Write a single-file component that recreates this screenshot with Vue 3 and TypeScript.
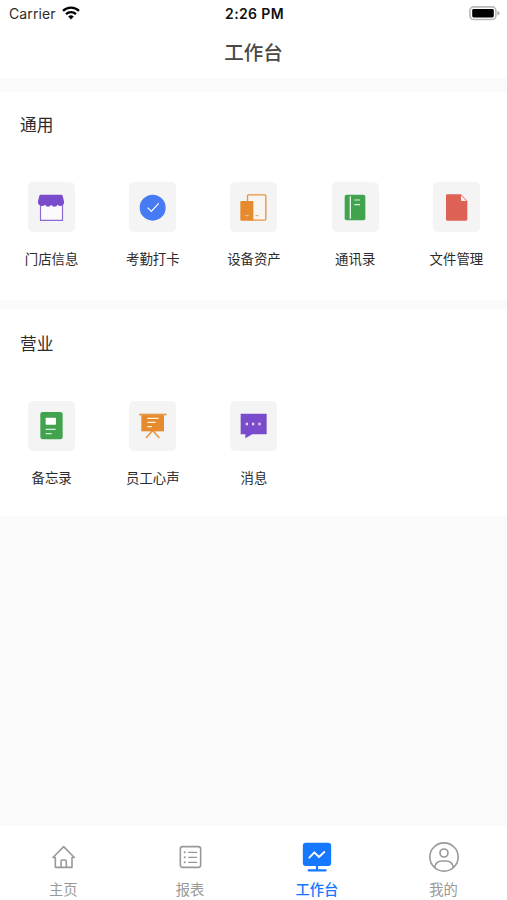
<script setup lang="ts">
interface Entry {
  icon: string
  label: string
}
interface Section {
  title: string
  entries: Entry[]
}

const sections: Section[] = [
  {
    title: '通用',
    entries: [
      { icon: 'store', label: '门店信息' },
      { icon: 'check', label: '考勤打卡' },
      { icon: 'device', label: '设备资产' },
      { icon: 'contacts', label: '通讯录' },
      { icon: 'file', label: '文件管理' },
    ],
  },
  {
    title: '营业',
    entries: [
      { icon: 'memo', label: '备忘录' },
      { icon: 'board', label: '员工心声' },
      { icon: 'message', label: '消息' },
    ],
  },
]

const tabs: Entry[] = [
  { icon: 'home', label: '主页' },
  { icon: 'report', label: '报表' },
  { icon: 'work', label: '工作台' },
  { icon: 'me', label: '我的' },
]
const active = 'work'
</script>

<template>
  <div class="screen">
    <header class="status">
      <div class="carrier">
        <span>Carrier</span>
        <svg class="wifi" viewBox="0 0 18 14" fill="none" stroke="#000" stroke-width="2.3">
          <path d="M1 4.9a11.4 11.4 0 0 1 16 0" />
          <path d="M4 8.1a7.1 7.1 0 0 1 10 0" />
          <path d="M9 13.6 6.2 10.6a4 4 0 0 1 5.6 0Z" fill="#000" stroke="none" />
        </svg>
      </div>
      <div class="clock">2:26 PM</div>
      <svg class="battery" viewBox="0 0 31 15">
        <rect x="0.9" y="0.9" width="26" height="12.6" rx="3.8" fill="#fff" stroke="#b9b9b9" stroke-width="1.6" />
        <rect x="3.2" y="3.1" width="21.6" height="8.4" rx="1.4" fill="#000" />
        <path d="M28.4 4.8q2.2.8 2.2 2.4t-2.2 2.4Z" fill="#b0b0b0" />
      </svg>
    </header>
    <h1 class="title">工作台</h1>

    <main class="content">
      <section v-for="s in sections" :key="s.title" class="section">
        <h2>{{ s.title }}</h2>
        <div class="grid">
          <div v-for="e in s.entries" :key="e.icon" class="entry">
            <div class="tile">
              <svg viewBox="0 0 141 150">
                <g v-if="e.icon === 'store'">
                  <path d="M37.500 66V115H103.500V66" fill="#fbfafd" stroke="#8b68d2" stroke-width="3.500" />
                  <path d="M38 38H100Q103 38 104 41L108 58V64Q106 72 98 72Q92 72 89 68Q85 74 79 74Q73 74 70 68Q66 74 60 74Q54 74 51 68Q47 73 41 72Q32 71 30 64V58L34 41Q35 38 38 38Z" fill="#7a4bcb" />
                </g>
                <g v-else-if="e.icon === 'check'">
                  <circle cx="71" cy="77" r="39" fill="#467bf4" />
                  <path d="M56 77L67 88L89 64" fill="none" stroke="#fff" stroke-width="3.600" />
                </g>
                <g v-else-if="e.icon === 'device'">
                  <path d="M52.500 60V42Q52.500 38.500 56 38.500H104Q107.500 38.500 107.500 42V111Q107.500 114.500 104 114.500H66" fill="#f8f5f0" stroke="#e89340" stroke-width="4" />
                  <rect x="31" y="57" width="39" height="59" rx="3" fill="#e68a2e" />
                  <path d="M46 101H56" stroke="#f5d4b0" stroke-width="3" />
                  <path d="M77 101H85" stroke="#d9a36b" stroke-width="3" />
                </g>
                <g v-else-if="e.icon === 'contacts'">
                  <rect x="38" y="38" width="62" height="77" rx="6" fill="#42a34f" />
                  <path d="M55 43V110" stroke="#e3f3e5" stroke-width="4" />
                  <path d="M67 54H84M67 68H84" stroke="#d8efdb" stroke-width="3.500" />
                </g>
                <g v-else-if="e.icon === 'file'">
                  <path d="M43 37H84L103 57V112Q103 116 99 116H43Q39 116 39 112V41Q39 37 43 37Z" fill="#dd6155" />
                  <path d="M84 40V54Q84 57 87 57H100Z" fill="#fdf1ef" />
                </g>
                <g v-else-if="e.icon === 'memo'">
                  <rect x="37" y="33" width="67" height="82" rx="7" fill="#42a34f" />
                  <rect x="53" y="50" width="31" height="21" rx="2" fill="#fff" />
                  <path d="M53 85H83M53 98H71" stroke="#d8f0db" stroke-width="4" />
                </g>
                <g v-else-if="e.icon === 'board'">
                  <path d="M71 88L51 111M71 88L91 111" stroke="#e69a48" stroke-width="5" />
                  <rect x="37" y="39" width="68" height="52" fill="#e68a2e" />
                  <path d="M30 40.500H113" stroke="#e69a48" stroke-width="5" />
                  <path d="M55 52H89M55 64H80M55 77H69" stroke="#fff0df" stroke-width="4" />
                </g>
                <g v-else>
                  <path d="M32 38H110V100H67L46 112V100H32Z" fill="#7a4bcb" />
                  <path d="M47 69h7M66 69h7M85 69h7" stroke="#e2d7f6" stroke-width="7" />
                </g>
              </svg>
            </div>
            <span class="label">{{ e.label }}</span>
          </div>
        </div>
      </section>
    </main>

    <nav class="tabs">
      <div v-for="t in tabs" :key="t.icon" class="tab" :class="{ active: t.icon === active }">
        <svg viewBox="0 0 96 96" fill="none" stroke="currentColor" stroke-width="4.800" stroke-linejoin="round" stroke-linecap="round">
          <g v-if="t.icon === 'home'">
            <path d="M50 17L82 49.500H75V79H25V49.500H18Z" />
            <path d="M42 78V61Q42 57 46 57H54Q58 57 58 61V78" />
          </g>
          <g v-else-if="t.icon === 'report'">
            <rect x="19" y="17" width="61" height="62" rx="7" />
            <path d="M44 34H68M44 49H68M44 64H68" stroke-width="4" />
            <path d="M32 34h.1M32 49h.1M32 64h.1" stroke-width="6" />
          </g>
          <g v-else-if="t.icon === 'work'">
            <rect x="5.500" y="5" width="85" height="70" rx="9" fill="currentColor" stroke="none" />
            <path d="M25 50L40 34L54 48L70 33" stroke="#fff" stroke-width="5.500" />
            <path d="M48 74V87M23 88H74" stroke-width="6.500" />
          </g>
          <g v-else>
            <circle cx="48" cy="48" r="42.500" />
            <circle cx="48" cy="36" r="12" stroke-width="5" />
            <path d="M20 79Q23 60 42 60H54Q73 60 76 79" />
          </g>
        </svg>
        <span>{{ t.label }}</span>
      </div>
    </nav>
  </div>
</template>

<style>
body {
  background: #fafafa;
}
</style>

<style scoped>
.screen {
  display: flex;
  flex-direction: column;
  height: 900px;
  font-family: Inter, 'Noto Sans CJK SC', sans-serif;
  background: #fafafa;
  overflow: hidden;
}
.status {
  display: grid;
  grid-template-columns: 1fr auto 1fr;
  align-items: center;
  height: 27px;
  padding: 0 7px 0 9px;
  box-sizing: border-box;
  background: #fff;
  font-size: 14px;
  color: #2b2b2b;
}
.carrier {
  display: flex;
  align-items: center;
  gap: 6px;
  letter-spacing: 0.1px;
}
.wifi {
  width: 18px;
  height: 14px;
  margin-bottom: 2px;
}
.clock {
  font-weight: 600;
  color: #111;
  letter-spacing: 0.36px;
}
.battery {
  width: 31px;
  height: 15px;
  justify-self: end;
}
.title {
  height: 51px;
  margin: 0;
  background: #fff;
  text-align: center;
  font-size: 19.500px;
  line-height: 52px;
  font-weight: 500;
  color: #4a4744;
}
.content {
  flex: 1;
  display: flex;
  flex-direction: column;
  gap: 9px;
  padding-top: 14px;
}
.section {
  height: 208px;
  background: #fff;
}
.section + .section {
  height: 207px;
}
.section + .section h2 {
  padding-top: 22px;
}
h2 {
  margin: 0;
  padding: 20px 20px 0;
  font-size: 16.700px;
  line-height: 26px;
  font-weight: 400;
  color: #2b2b2b;
}
.grid {
  display: grid;
  grid-template-columns: repeat(5, 1fr);
  padding: 44px 0 0 1px;
}
.entry {
  display: flex;
  flex-direction: column;
  align-items: center;
  gap: 17px;
}
.tile {
  width: 47px;
  height: 50px;
  border-radius: 5px;
  background: #f4f4f4;
}
.tile svg {
  display: block;
  width: 47px;
  height: 50px;
}
.label {
  font-size: 13.400px;
  line-height: 20px;
  color: #2b2b2b;
  white-space: nowrap;
}
.tabs {
  display: grid;
  grid-template-columns: repeat(4, 1fr);
  height: 74px;
  background: #fff;
}
.tab {
  display: flex;
  flex-direction: column;
  align-items: center;
  gap: 7px;
  padding-top: 15px;
  color: #999;
  font-size: 14.300px;
  line-height: 20px;
}
.tab svg {
  width: 32px;
  height: 32px;
}
.active {
  color: #1677ff;
  font-weight: 500;
}
</style>
